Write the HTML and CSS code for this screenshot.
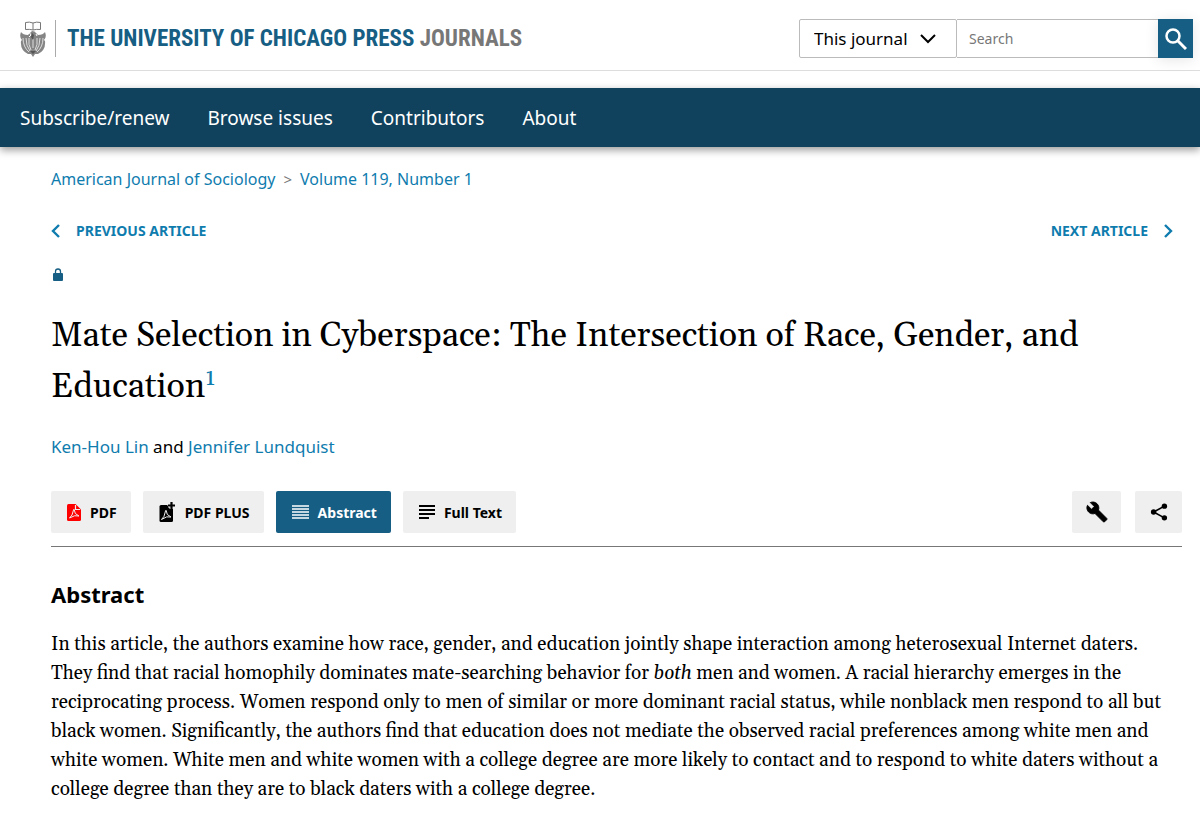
FILE: index.html
```html
<!DOCTYPE html>
<html lang="en">
<head>
    <meta charset="UTF-8">
    <meta name="viewport" content="width=device-width, initial-scale=1.0">
    <title>Mate Selection in Cyberspace | American Journal of Sociology</title>
    <link rel="stylesheet" href="styles.css">
</head>
<body>
    <header class="site-header">
        <a class="logo" href="#">
            <svg class="crest" viewBox="0 0 26 36" aria-hidden="true">
                <path d="M1 11Q-1 16 2 19L1 20Q0 29 8 33L11 33L13 36L15 33L18 33Q26 29 25 20L24 19Q27 16 25 11Q23 14 18 14L16 12Q15 10 12 10L9 13L8 14Q3 14 1 11Z" fill="#858585"/>
                <path d="M5.500 1.500Q9.500 .5 13 2Q16.500 .5 20.500 1.500V8.500Q16.500 8 13 9Q9.500 8 5.500 8.500ZM13 2V9" fill="#fff" stroke="#777" stroke-width="1"/>
                <path d="M3 17Q3 26 9 31M6 17Q6 25 10 30M9 17Q8 24 11 29M23 17Q23 26 17 31M20 17Q20 25 16 30M17 17Q18 24 15 29M13 18V27" fill="none" stroke="#ddd" stroke-width="1"/>
                <path d="M9 11L11 14L9 16M16 13L17 15" fill="none" stroke="#fff" stroke-width="1"/>
                <path d="M12 12L14 14L13 19L11 16ZM10 30L13 33L16 30" fill="#555"/>
            </svg>
            <span class="logo-text">THE UNIVERSITY OF CHICAGO PRESS <span class="logo-sub">JOURNALS</span></span>
        </a>
        <form class="search">
            <div class="scope">
                <select class="scope-select" aria-label="Search in">
                    <option>This journal</option>
                </select>
                <svg class="scope-arrow" viewBox="0 0 16 10" aria-hidden="true">
                    <path d="M1 1l7 7 7-7" fill="none" stroke="#000" stroke-width="2"/>
                </svg>
            </div>
            <input class="search-input" type="text" placeholder="Search" aria-label="Search">
            <button class="search-btn" type="submit" aria-label="Submit search">
                <svg viewBox="0 0 22 22" aria-hidden="true">
                    <circle cx="8" cy="8" r="6.500" fill="none" stroke="#fff" stroke-width="2.500"/>
                    <path d="M13 13l8 8" stroke="#fff" stroke-width="3"/>
                </svg>
            </button>
        </form>
    </header>

    <nav class="main-nav">
        <a href="#">Subscribe/renew</a>
        <a href="#">Browse issues</a>
        <a href="#">Contributors</a>
        <a href="#">About</a>
    </nav>

    <main class="article">
        <div class="breadcrumb">
            <a href="#">American Journal of Sociology</a>
            <span class="separator">&gt;</span>
            <a href="#">Volume 119, Number 1</a>
        </div>

        <div class="article-nav">
            <a href="#">
                <svg viewBox="0 0 10 14" aria-hidden="true"><path d="M8 1L2 7l6 6" fill="none" stroke="currentColor" stroke-width="2.400"/></svg>
                PREVIOUS ARTICLE
            </a>
            <a href="#">
                NEXT ARTICLE
                <svg viewBox="0 0 10 14" aria-hidden="true"><path d="M2 1l6 6-6 6" fill="none" stroke="currentColor" stroke-width="2.400"/></svg>
            </a>
        </div>

        <div class="access">
            <svg viewBox="0 0 10 13" aria-hidden="true">
                <path d="M2.500 6V3.500a2.500 2.500 0 0 1 5 0V6" fill="none" stroke="#165e83" stroke-width="1.300"/>
                <rect y="5" width="10" height="8" rx="1" fill="#165e83"/>
            </svg>
        </div>

        <h1>Mate Selection in Cyberspace: The Intersection of Race, Gender, and Education<sup><a href="#">1</a></sup></h1>

        <div class="authors"><a href="#">Ken-Hou Lin</a> and <a href="#">Jennifer Lundquist</a></div>

        <div class="toolbar">
            <a class="tool" href="#">
                <svg class="icon-pdf" viewBox="0 0 14 17" aria-hidden="true">
                    <path d="M1.500 0H8.500L14 5.500V15.500Q14 17 12.500 17H1.500Q0 17 0 15.500V1.500Q0 0 1.500 0Z" fill="#f00"/>
                    <path d="M8.500 1V5.500H13" fill="none" stroke="#efefef" stroke-width="1.200"/>
                    <path d="M2.500 14Q5.500 12 6.500 6Q7 4.500 7.300 6Q7 10 12 12Q8 10.500 2.500 14Z" fill="none" stroke="#efefef" stroke-width="1"/>
                </svg>
                PDF
            </a>
            <a class="tool" href="#">
                <svg class="icon-plus" viewBox="0 0 17 20" aria-hidden="true">
                    <path d="M2 3H8L14 9V18.500Q14 20 12.500 20H2Q.5 20 .5 18.500V4.500Q.5 3 2 3Z"/>
                    <path d="M12.500 0V7M9 3.500H16" fill="none" stroke="#efefef" stroke-width="4"/>
                    <path d="M9 7H14V12H9Z"/>
                    <path d="M12.500 0V7M9 3.500H16" fill="none" stroke="#000" stroke-width="2.200"/>
                    <path d="M2.500 17.500Q5.500 15.500 6.500 9Q7 7.500 7.300 9Q7 13 12 15Q8 13.500 2.500 17.500Z" fill="none" stroke="#efefef" stroke-width="1"/>
                </svg>
                PDF PLUS
            </a>
            <a class="tool active" href="#">
                <svg class="icon-lines" viewBox="0 0 17 14" aria-hidden="true">
                    <path d="M0 1H17M0 4H17M0 7H17M0 10H17M0 13H17" stroke="currentColor" stroke-width="1.700"/>
                </svg>
                Abstract
            </a>
            <a class="tool" href="#">
                <svg class="icon-text" viewBox="0 0 16 14" aria-hidden="true">
                    <path d="M0 1H16M0 5H16M0 9H16M0 13H10" stroke="currentColor" stroke-width="2"/>
                </svg>
                Full Text
            </a>
            <div class="tool-actions">
                <button class="tool-btn wide" type="button" aria-label="Tools">
                    <svg viewBox="0 0 24 24" aria-hidden="true">
                        <path d="M22.700 19l-9.100-9.100c.9-2.300.4-5-1.500-6.900-2-2-5-2.400-7.400-1.300L9 6 6 9 1.600 4.700C.4 7.100.9 10.100 2.900 12.100c1.900 1.900 4.600 2.400 6.900 1.500l9.100 9.100c.4.4 1 .4 1.400 0l2.300-2.300c.5-.4.5-1.100.1-1.400z" stroke="#000" stroke-width="1"/>
                    </svg>
                </button>
                <button class="tool-btn" type="button" aria-label="Share">
                    <svg viewBox="0 0 20 20" aria-hidden="true">
                        <path d="M16 3.500L4 10l12 6.500" fill="none" stroke="#000" stroke-width="1.800"/>
                        <circle cx="16" cy="3.500" r="3"/>
                        <circle cx="4" cy="10" r="3"/>
                        <circle cx="16" cy="16.500" r="3"/>
                    </svg>
                </button>
            </div>
        </div>

        <section class="abstract">
            <h2>Abstract</h2>
            <p>In this article, the authors examine how race, gender, and education jointly shape interaction among heterosexual Internet daters. They find that racial homophily dominates mate-searching behavior for <em>both</em> men and women. A racial hierarchy emerges in the reciprocating process. Women respond only to men of similar or more dominant racial status, while nonblack men respond to all but black women. Significantly, the authors find that education does not mediate the observed racial preferences among white men and white women. White men and white women with a college degree are more likely to contact and to respond to white daters without a college degree than they are to black daters with a college degree.</p>
        </section>
    </main>
</body>
</html>
```
FILE: styles.css
```css
* {
    box-sizing: border-box;
}
body {
    margin: 0;
    font-family: "Noto Sans", sans-serif;
    font-size: 16px;
    color: #000;
    background-color: #fff;
}
a {
    color: #0f7cae;
    text-decoration: none;
}
svg {
    display: block;
    flex: none;
}

/* Header */
.site-header {
    display: flex;
    justify-content: space-between;
    align-items: center;
    padding: 19px 7px 12px 20px;
    border-bottom: 1px solid #ddd;
    margin-bottom: 17px;
}
.logo {
    display: flex;
    align-items: center;
}
.crest {
    width: 26px;
    height: 36px;
    margin-right: 9px;
}
.logo-text {
    border-left: 1px solid #aaa;
    padding-left: 11px;
    font-family: "Liberation Sans Narrow", "Roboto Condensed", "Liberation Sans", sans-serif;
    font-size: 23px;
    line-height: 37px;
    font-weight: 700;
    color: #165e83;
    white-space: nowrap;
}
.logo-sub {
    color: #777;
}
.search {
    display: flex;
    align-items: flex-start;
}
.scope {
    display: grid;
    align-items: center;
}
.scope-select,
.scope-arrow {
    grid-area: 1 / 1;
}
.scope-select {
    appearance: none;
    width: 158px;
    height: 39px;
    padding: 0 14px;
    border: 1px solid #bbb;
    border-radius: 2px;
    background-color: #fff;
    color: #000;
    font-family: inherit;
    font-size: 17px;
}
.scope-arrow {
    justify-self: end;
    width: 16px;
    height: 10px;
    margin-right: 21px;
    pointer-events: none;
}
.search-input {
    width: 201px;
    height: 39px;
    padding: 0 12px;
    border: 1px solid #bbb;
    border-left: none;
    border-right: none;
    font-family: inherit;
    font-size: 14px;
}
.search-input::placeholder {
    color: #777;
}
.search-btn {
    display: flex;
    align-items: center;
    justify-content: center;
    width: 35px;
    height: 39px;
    padding: 0;
    border: none;
    background-color: #165e83;
    box-shadow: 0 2px 14px rgba(0, 0, 0, 0.1);
}
.search-btn svg {
    width: 22px;
    height: 22px;
}

/* Navigation */
.main-nav {
    display: flex;
    align-items: center;
    gap: 38px;
    height: 59px;
    padding: 0 20px;
    background-color: #10425e;
    box-shadow: 0 3px 8px rgba(0, 0, 0, 0.4);
}
.main-nav a {
    color: #fff;
    font-size: 19px;
}

/* Article */
.article {
    padding: 20px 18px 28px 51px;
}
.breadcrumb {
    display: flex;
    gap: 8px;
    line-height: 24px;
}
.separator {
    color: #777;
    font-size: 15px;
}
.article-nav {
    display: flex;
    justify-content: space-between;
    margin-top: 28px;
    padding-right: 9px;
    font-size: 14px;
    line-height: 24px;
    font-weight: 700;
}
.article-nav a {
    display: flex;
    align-items: center;
    gap: 15px;
}
.article-nav svg {
    width: 10px;
    height: 14px;
}
.access {
    padding: 4px 2px 3px;
    margin-top: 21px;
}
.access svg {
    width: 10px;
    height: 13px;
}
h1 {
    margin: 27px 0 20px;
    font-family: Georgia, Gelasio, "Liberation Serif", serif;
    font-size: 34px;
    line-height: 51px;
    font-weight: 400;
}
h1 sup {
    font-size: 24px;
    line-height: 0;
}
.authors {
    font-size: 17px;
    line-height: 28px;
}
.toolbar {
    display: flex;
    gap: 12px;
    margin-top: 30px;
    padding-bottom: 13px;
    border-bottom: 1px solid #777;
}
.tool {
    display: flex;
    align-items: center;
    height: 42px;
    gap: 9px;
    padding: 0 14px 0 16px;
    border-radius: 2px;
    background-color: #efefef;
    color: #000;
    font-size: 14px;
    font-weight: 700;
}
.tool.active {
    background-color: #165e83;
    color: #fff;
}
.icon-pdf {
    width: 14px;
    height: 17px;
}
.icon-plus {
    width: 17px;
    height: 20px;
}
.icon-lines {
    width: 17px;
    height: 14px;
}
.icon-text {
    width: 16px;
    height: 14px;
}
.tool-actions {
    display: flex;
    gap: 14px;
    margin-left: auto;
}
.tool-btn {
    display: flex;
    align-items: center;
    justify-content: center;
    width: 47px;
    height: 42px;
    padding: 0;
    border: none;
    border-radius: 2px;
    background-color: #efefef;
}
.tool-btn.wide {
    width: 49px;
}
.tool-btn svg {
    width: 18px;
    height: 20px;
}
.tool-btn.wide svg {
    width: 22px;
    height: 22px;
}
.abstract h2 {
    margin: 31px 0 20px;
    font-size: 22px;
    line-height: 32px;
}
.abstract p {
    margin: 0;
    font-family: Georgia, Gelasio, "Liberation Serif", serif;
    font-size: 19px;
    line-height: 29px;
}
```
